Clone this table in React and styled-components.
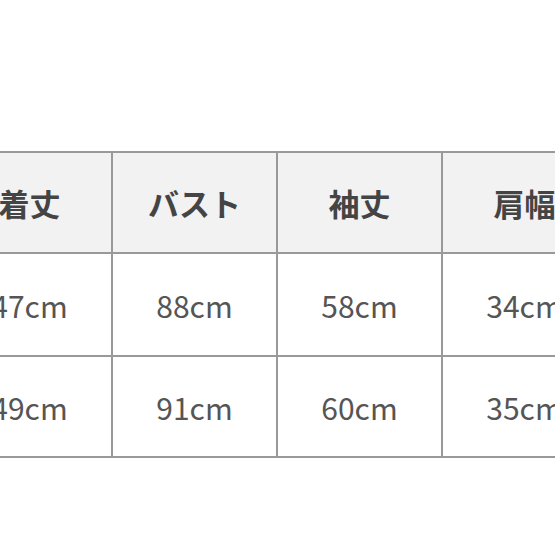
import React from "react";
import styled, { createGlobalStyle } from "styled-components";

const GlobalStyle = createGlobalStyle`
  html, body {
    margin: 0;
    padding: 0;
    background: #ffffff;
    overflow: hidden;
  }
  body {
    font-family: "Noto Sans CJK JP", "Noto Sans", sans-serif;
  }
`;

const Page = styled.div`
  width: 555px;
  height: 555px;
  padding-top: 151px;
  box-sizing: border-box;
  overflow: hidden;
`;

const SizeTable = styled.table`
  margin-left: -54px;
  border-collapse: collapse;
  table-layout: fixed;
  width: 662px;
`;

const HeadCell = styled.th`
  width: 163px;
  height: 99px;
  padding: 0;
  border: 2px solid #999;
  background: #f2f2f2;
  color: #444;
  font-size: 31px;
  font-weight: 700;
  text-align: center;
  vertical-align: middle;
`;

const Cell = styled.td`
  height: ${(props) => props.h}px;
  padding: 0;
  border: 2px solid #999;
  color: #555;
  font-size: 30px;
  font-weight: 400;
  text-align: center;
  vertical-align: middle;
`;

const headers = ["着丈", "バスト", "袖丈", "肩幅"];
const rows = [
  ["47cm", "88cm", "58cm", "34cm"],
  ["49cm", "91cm", "60cm", "35cm"],
];

const App = () => {
  return (
    <>
      <GlobalStyle />
      <Page>
        <SizeTable>
          <thead>
            <tr>
              {headers.map((h) => (
                <HeadCell key={h}>{h}</HeadCell>
              ))}
            </tr>
          </thead>
          <tbody>
            {rows.map((r, i) => (
              <tr key={i}>
                {r.map((v, j) => (
                  <Cell key={j} h={i === 0 ? 101 : 99}>
                    {v}
                  </Cell>
                ))}
              </tr>
            ))}
          </tbody>
        </SizeTable>
      </Page>
    </>
  );
};

export default App;
